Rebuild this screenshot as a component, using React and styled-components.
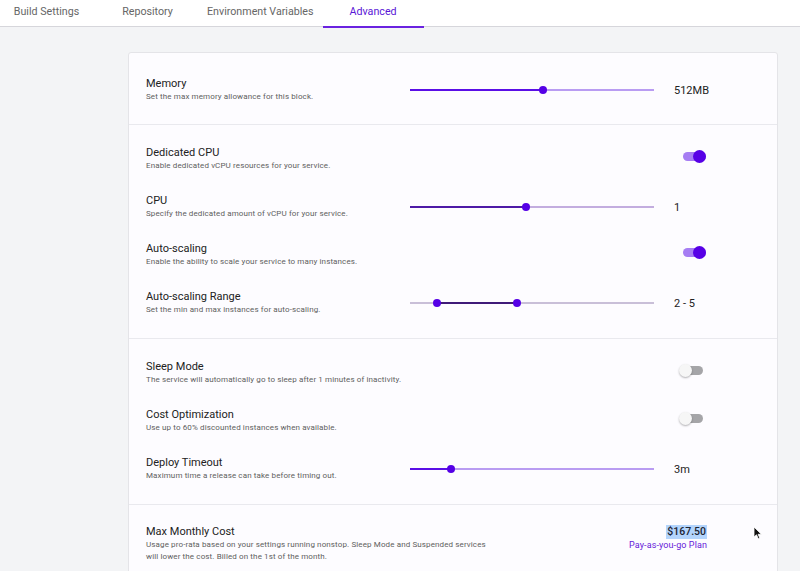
import React from 'react';
import styled, { createGlobalStyle } from 'styled-components';

const GlobalStyle = createGlobalStyle`
    html, body {
        margin:0;
        padding:0;
        background:#f3f4f6;
        font-family:Roboto, "Noto Sans", sans-serif;
        color:#222;
    }
    * { box-sizing:border-box; }
`;

const Page = styled.div`
    position:relative;
    width:800px;
    height:571px;
    overflow:hidden;
`;

const TabBar = styled.div`
    display:flex;
    height:27px;
    background:#fff;
    border-bottom:1.5px solid #d6d6db;
    margin-left:-4px;
`;

const Tab = styled.div`
    min-width:101px;
    padding:0 9px 2px;
    display:flex;
    align-items:center;
    justify-content:center;
    font-size:10.7px;
    color:${p => p.active ? '#5a16d6' : '#666'};
    border-bottom:2px solid ${p => p.active ? '#6a22e0' : 'transparent'};
    margin-bottom:-1.5px;
`;

const Card = styled.div`
    margin:25px 0 0 128px;
    width:650px;
    background:#fdfcff;
    border:1px solid #e4e4e8;
    border-radius:3px;
`;

const Section = styled.div`
    display:flex;
    flex-direction:column;
    gap:20px;
    padding:${p => p.first ? '23px 70px 20px 17px' : '20px 70px 21px 17px'};
    border-top:${p => p.first ? 'none' : '1px solid #e9e9ee'};
`;

const Row = styled.div`
    display:grid;
    grid-template-columns:minmax(0, 1fr) 244px 33px;
    column-gap:20px;
    align-items:center;
    height:28px;
`;

const Info = styled.div`
    display:flex;
    flex-direction:column;
    white-space:nowrap;
    min-width:0;
`;

const Label = styled.div`
    font-size:11px;
    line-height:14px;
    color:#222;
`;

const Desc = styled.div`
    font-size:8px;
    line-height:12px;
    letter-spacing:0.12px;
    color:#5e5e5e;
`;

const Value = styled.div`
    font-size:11px;
    color:#222;
    white-space:nowrap;
`;

const Track = styled.div`
    position:relative;
    height:8px;
    &::before{
        content:'';
        position:absolute;
        left:0; right:0; top:3px;
        height:1.5px;
        background:${p => p.rail};
    }
`;

const Fill = styled.div`
    position:absolute;
    top:3px;
    height:1.5px;
    background:${p => p.color};
`;

const Thumb = styled.div`
    position:absolute;
    top:0;
    width:8px;
    height:8px;
    margin-left:-4px;
    border-radius:50%;
    background:#5500e6;
`;

const Slider = ({values, fill = '#5a0ee6', rail = '#b99cf2'}) => {
    const from = values.length > 1 ? values[0] : 0;
    const to = values[values.length - 1];
    return (
        <Track rail={rail}>
            <Fill color={fill} style={{left: from + '%', width: (to - from) + '%'}}/>
            {values.map(v => <Thumb key={v} style={{left: v + '%'}}/>)}
        </Track>
    );
};

const SwitchCell = styled.div`
    grid-column:3;
    display:flex;
    justify-content:flex-end;
    padding-right:${p => p.on ? '1px' : '4px'};
    margin-bottom:6px;
`;

const SwitchTrack = styled.div`
    position:relative;
    width:23px;
    height:9px;
    border-radius:5px;
    background:${p => p.on ? '#a67df3' : '#a5a5a8'};
`;

const SwitchKnob = styled.div`
    position:absolute;
    top:-2px;
    left:${p => p.on ? '10px' : '-1px'};
    width:13px;
    height:13px;
    border-radius:50%;
    background:${p => p.on ? '#5700e6' : '#f6f6f6'};
    box-shadow:${p => p.on ? 'none' : '0 1px 2px rgba(0,0,0,0.3)'};
`;

const Switch = ({on}) => (
    <SwitchCell on={on}>
        <SwitchTrack on={on}><SwitchKnob on={on}/></SwitchTrack>
    </SwitchCell>
);

const CostRow = styled.div`
    display:flex;
    justify-content:space-between;
    align-items:flex-start;
`;

const Price = styled.div`
    display:flex;
    flex-direction:column;
    align-items:flex-end;
`;

const Amount = styled.span`
    font-size:10.5px;
    line-height:14px;
    font-weight:500;
    color:#1d2433;
    background:#b3d4fc;
    padding:0 1px;
`;

const Plan = styled.span`
    font-size:9px;
    line-height:13px;
    color:#6619d9;
    letter-spacing:0.1px;
`;

const Cursor = styled.svg`
    position:absolute;
    left:753px;
    top:526px;
`;

const Setting = ({label, desc, children}) => (
    <Row>
        <Info>
            <Label>{label}</Label>
            <Desc>{desc}</Desc>
        </Info>
        {children}
    </Row>
);

export default function App(){
    return (
        <Page>
            <GlobalStyle/>
            <TabBar>
                <Tab>Build Settings</Tab>
                <Tab>Repository</Tab>
                <Tab>Environment Variables</Tab>
                <Tab active>Advanced</Tab>
            </TabBar>
            <Card>
                <Section first>
                    <Setting label="Memory" desc="Set the max memory allowance for this block.">
                        <Slider values={[54.5]}/>
                        <Value>512MB</Value>
                    </Setting>
                </Section>
                <Section>
                    <Setting label="Dedicated CPU" desc="Enable dedicated vCPU resources for your service.">
                        <Switch on/>
                    </Setting>
                    <Setting label="CPU" desc="Specify the dedicated amount of vCPU for your service.">
                        <Slider values={[47.5]} fill="#4e1aa6" rail="#c3addf"/>
                        <Value>1</Value>
                    </Setting>
                    <Setting label="Auto-scaling" desc="Enable the ability to scale your service to many instances.">
                        <Switch on/>
                    </Setting>
                    <Setting label="Auto-scaling Range" desc="Set the min and max instances for auto-scaling.">
                        <Slider values={[11, 44]} fill="#3f1a78" rail="#c9bfd8"/>
                        <Value>2 - 5</Value>
                    </Setting>
                </Section>
                <Section>
                    <Setting label="Sleep Mode" desc="The service will automatically go to sleep after 1 minutes of inactivity.">
                        <Switch/>
                    </Setting>
                    <Setting label="Cost Optimization" desc="Use up to 60% discounted instances when available.">
                        <Switch/>
                    </Setting>
                    <Setting label="Deploy Timeout" desc="Maximum time a release can take before timing out.">
                        <Slider values={[17]}/>
                        <Value>3m</Value>
                    </Setting>
                </Section>
                <Section>
                    <CostRow>
                        <Info>
                            <Label>Max Monthly Cost</Label>
                            <Desc>Usage pro-rata based on your settings running nonstop. Sleep Mode and Suspended services<br/>will lower the cost. Billed on the 1st of the month.</Desc>
                        </Info>
                        <Price>
                            <Amount>$167.50</Amount>
                            <Plan>Pay-as-you-go Plan</Plan>
                        </Price>
                    </CostRow>
                </Section>
            </Card>
            <Cursor width="10" height="14" viewBox="0 0 10 14">
                <path d="M1 1 L1 11 L3.5 8.8 L5.3 12.8 L6.8 12.1 L5.1 8.3 L8.4 8.3 Z" fill="#111" stroke="#fff" strokeWidth="0.8"/>
            </Cursor>
        </Page>
    );
}
